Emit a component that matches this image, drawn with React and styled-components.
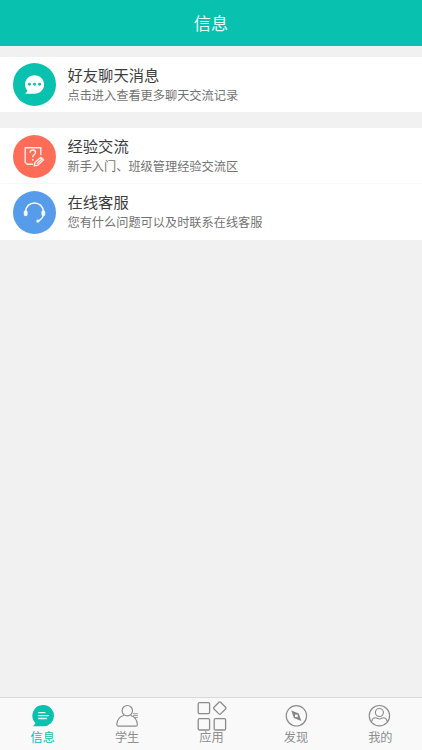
import styled, { createGlobalStyle } from 'styled-components';

const GlobalStyle = createGlobalStyle`
  * {
    box-sizing: border-box;
  }

  body {
    margin: 0;
    background: #f1f1f1;
    font-family: "Noto Sans CJK SC", sans-serif;
  }
`;

function ChatIcon() {
  return (
    <svg width="43" height="43" viewBox="0 0 43 43">
      <path
        d="M21.5 12.2c5.4 0 9.600 4.100 9.600 9.300s-4.200 9.300-9.600 9.300h-8.300c-.7 0-.8-.7-.3-1l1.200-1.200c.4-.5.3-.9 0-1.400a9.800 9.800 0 0 1-2.100-5.700c0-5.200 4.300-9.300 9.500-9.300z"
        fill="#fff"
      />
      <circle cx="16.400" cy="21.300" r="1.450" fill="#08c1ae" />
      <circle cx="21.500" cy="21.300" r="1.450" fill="#08c1ae" />
      <circle cx="26.600" cy="21.300" r="1.450" fill="#08c1ae" />
    </svg>
  );
}

function ExperienceIcon() {
  return (
    <svg
      width="43"
      height="43"
      viewBox="0 0 43 43"
      fill="none"
      stroke="#ffece7"
      strokeWidth="1.4"
      strokeLinecap="round"
      strokeLinejoin="round"
    >
      <path d="M27.800 19.500v-6.800H12.200v14.800l2 1.700h5.600" />
      <path d="M17.100 17.400c.1-1.500 1.200-2.400 2.700-2.400s2.700 1 2.700 2.400c0 1.900-2.700 2.200-2.700 4.400" />
      <path d="M19.800 24.600v.2" strokeWidth="1.700" />
      <path d="M22 27.600l5.800-5.300 2.800 2.500-5.900 5.400-3.400.7z" />
      <path d="M24.300 28.300l4.500-4.100" />
    </svg>
  );
}

function ServiceIcon() {
  return (
    <svg width="43" height="43" viewBox="0 0 43 43" fill="none" stroke="#fff">
      <path d="M12.600 20.500c.3-5 3.900-8.500 8.900-8.500s8.600 3.500 8.900 8.500" strokeWidth="1.400" />
      <rect x="11.200" y="19.700" width="3" height="5" rx="1" fill="#fff" strokeWidth=".6" />
      <rect x="28.800" y="19.700" width="3" height="5" rx="1" fill="#fff" strokeWidth=".6" />
      <path d="M30.400 24.500c-.7 2.200-2.500 4.200-5 5.400" strokeWidth="1.100" />
      <circle cx="24.900" cy="30.100" r="1.600" fill="#fff" stroke="none" />
    </svg>
  );
}

function MessageTabIcon() {
  return (
    <svg width="32" height="32" viewBox="0 0 32 32">
      <path
        d="M16.400 5.100a10.600 10.600 0 1 1 0 21.200H6.900c-.7 0-.7-.6-.3-.9l1.500-1.400c.3-.4.3-.8 0-1.200A10.600 10.600 0 0 1 16.400 5.100z"
        fill="#08c1ae"
      />
      <path d="M11.200 12.700h7.200M11.200 15.600h10.700M11.200 18.500h8.700" stroke="#e4fffb" strokeWidth="1.300" />
    </svg>
  );
}

function StudentTabIcon() {
  return (
    <svg width="32" height="32" viewBox="0 0 32 32" fill="none" stroke="#8c8c8c" strokeWidth="1.150">
      <circle cx="16.300" cy="10.700" r="5.200" />
      <path d="M13 15.200c-4.500 1.400-7 4.800-7.200 9.200 0 1.100.5 1.700 1.600 1.700h17.300c1.200 0 1.800-.6 1.700-1.700-.3-4.400-2.600-7.800-7-9.200" />
      <path d="M22 13.700h4.800M22 15.600h4.800M23.300 17.600h3.500" strokeWidth=".9" />
    </svg>
  );
}

function AppsTabIcon() {
  return (
    <svg width="32" height="32" viewBox="0 0 32 32" fill="none" stroke="#8c8c8c" strokeWidth="1.300">
      <rect x="2.200" y="2.600" width="11.400" height="11" rx="1.300" />
      <rect x="2.200" y="18.600" width="11.400" height="11.400" rx="1.300" />
      <rect x="18.200" y="18.600" width="11.400" height="11.400" rx="1.300" />
      <rect x="19.100" y="3.400" width="9.400" height="9.400" rx="1.200" transform="rotate(45 23.800 8.100)" />
    </svg>
  );
}

function DiscoverTabIcon() {
  return (
    <svg width="32" height="32" viewBox="0 0 32 32">
      <circle cx="16.400" cy="15.800" r="10.200" fill="none" stroke="#8c8c8c" strokeWidth="1.150" />
      <path
        fillRule="evenodd"
        d="M11.300 10.500l7.500 2.900 2.500 7.600-7.400-2.900zM15.100 14.400l-.1 2.500 2.700.4.100-2.600z"
        fill="#858585"
      />
    </svg>
  );
}

function MineTabIcon() {
  return (
    <svg width="32" height="32" viewBox="0 0 32 32" fill="none" stroke="#8c8c8c" strokeWidth="1.150">
      <circle cx="15.400" cy="15.700" r="10.200" />
      <circle cx="15.400" cy="12.500" r="4" />
      <path d="M7.800 21.500c.3-2.600 1.500-3.800 3.700-3.800 1.200 0 2.300 1.300 3.900 1.300s2.700-1.300 3.900-1.300c2.200 0 3.400 1.200 3.700 3.800" />
    </svg>
  );
}

const friendItems = [
  { title: '好友聊天消息', text: '点击进入查看更多聊天交流记录', color: '#08c1ae', Icon: ChatIcon },
];

const serviceItems = [
  { title: '经验交流', text: '新手入门、班级管理经验交流区', color: '#ff6d59', Icon: ExperienceIcon },
  { title: '在线客服', text: '您有什么问题可以及时联系在线客服', color: '#579ceb', Icon: ServiceIcon },
];

const tabs = [
  { label: '信息', Icon: MessageTabIcon, active: true },
  { label: '学生', Icon: StudentTabIcon },
  { label: '应用', Icon: AppsTabIcon },
  { label: '发现', Icon: DiscoverTabIcon },
  { label: '我的', Icon: MineTabIcon },
];

function MessageList({ items, rowHeight }) {
  return (
    <List>
      {items.map(({ title, text, color, Icon }) => (
        <ListItem key={title} $height={rowHeight}>
          <Avatar $color={color}>
            <Icon />
          </Avatar>
          <ItemBody>
            <ItemTitle>{title}</ItemTitle>
            <ItemText>{text}</ItemText>
          </ItemBody>
        </ListItem>
      ))}
    </List>
  );
}

function App() {
  return (
    <Page>
      <GlobalStyle />
      <Header>信息</Header>
      <Content>
        <MessageList items={friendItems} rowHeight={55} />
        <MessageList items={serviceItems} rowHeight={56} />
      </Content>
      <TabBar>
        {tabs.map(({ label, Icon, active }) => (
          <Tab key={label} $active={active}>
            <Icon />
            <TabLabel>{label}</TabLabel>
          </Tab>
        ))}
      </TabBar>
    </Page>
  );
}

export default App;

const Page = styled.div`
  display: flex;
  flex-direction: column;
  height: 100vh;
  overflow: hidden;
`;

const Header = styled.header`
  height: 46px;
  flex-shrink: 0;
  background: #08c1ae;
  color: #e9fffc;
  font-size: 17.2px;
  line-height: 46px;
  text-align: center;
`;

const Content = styled.main`
  flex: 1;
  display: flex;
  flex-direction: column;
  gap: 16px;
  padding-top: 11px;
`;

const List = styled.section`
  background: #fff;
`;

const ListItem = styled.div`
  display: flex;
  align-items: center;
  gap: 12px;
  height: ${(props) => props.$height}px;
  padding-left: 12.5px;

  &:not(:last-child) {
    box-shadow: inset 0 -1px #f8f8f8;
  }
`;

const Avatar = styled.div`
  width: 43px;
  height: 43px;
  border-radius: 50%;
  background: ${(props) => props.$color};

  svg {
    display: block;
  }
`;

const ItemBody = styled.div`
  padding-bottom: 2px;
`;

const ItemTitle = styled.div`
  margin-bottom: 2px;
  color: #3c3c3c;
  font-size: 15.3px;
  line-height: 20px;
`;

const ItemText = styled.div`
  color: #737373;
  font-size: 12.2px;
  line-height: 18px;
`;

const TabBar = styled.nav`
  display: flex;
  height: 53px;
  flex-shrink: 0;
  border-top: 1px solid #d9d9d9;
  background: #f9f9f9;
`;

const Tab = styled.div`
  flex: 1;
  display: flex;
  flex-direction: column;
  align-items: center;
  padding: 2px 0 0 1px;
  color: ${(props) => (props.$active ? '#08c1ae' : '#8e8e8e')};

  svg {
    flex-shrink: 0;
  }
`;

const TabLabel = styled.span`
  margin-top: -4px;
  font-size: 12.2px;
  line-height: 18px;
`;
